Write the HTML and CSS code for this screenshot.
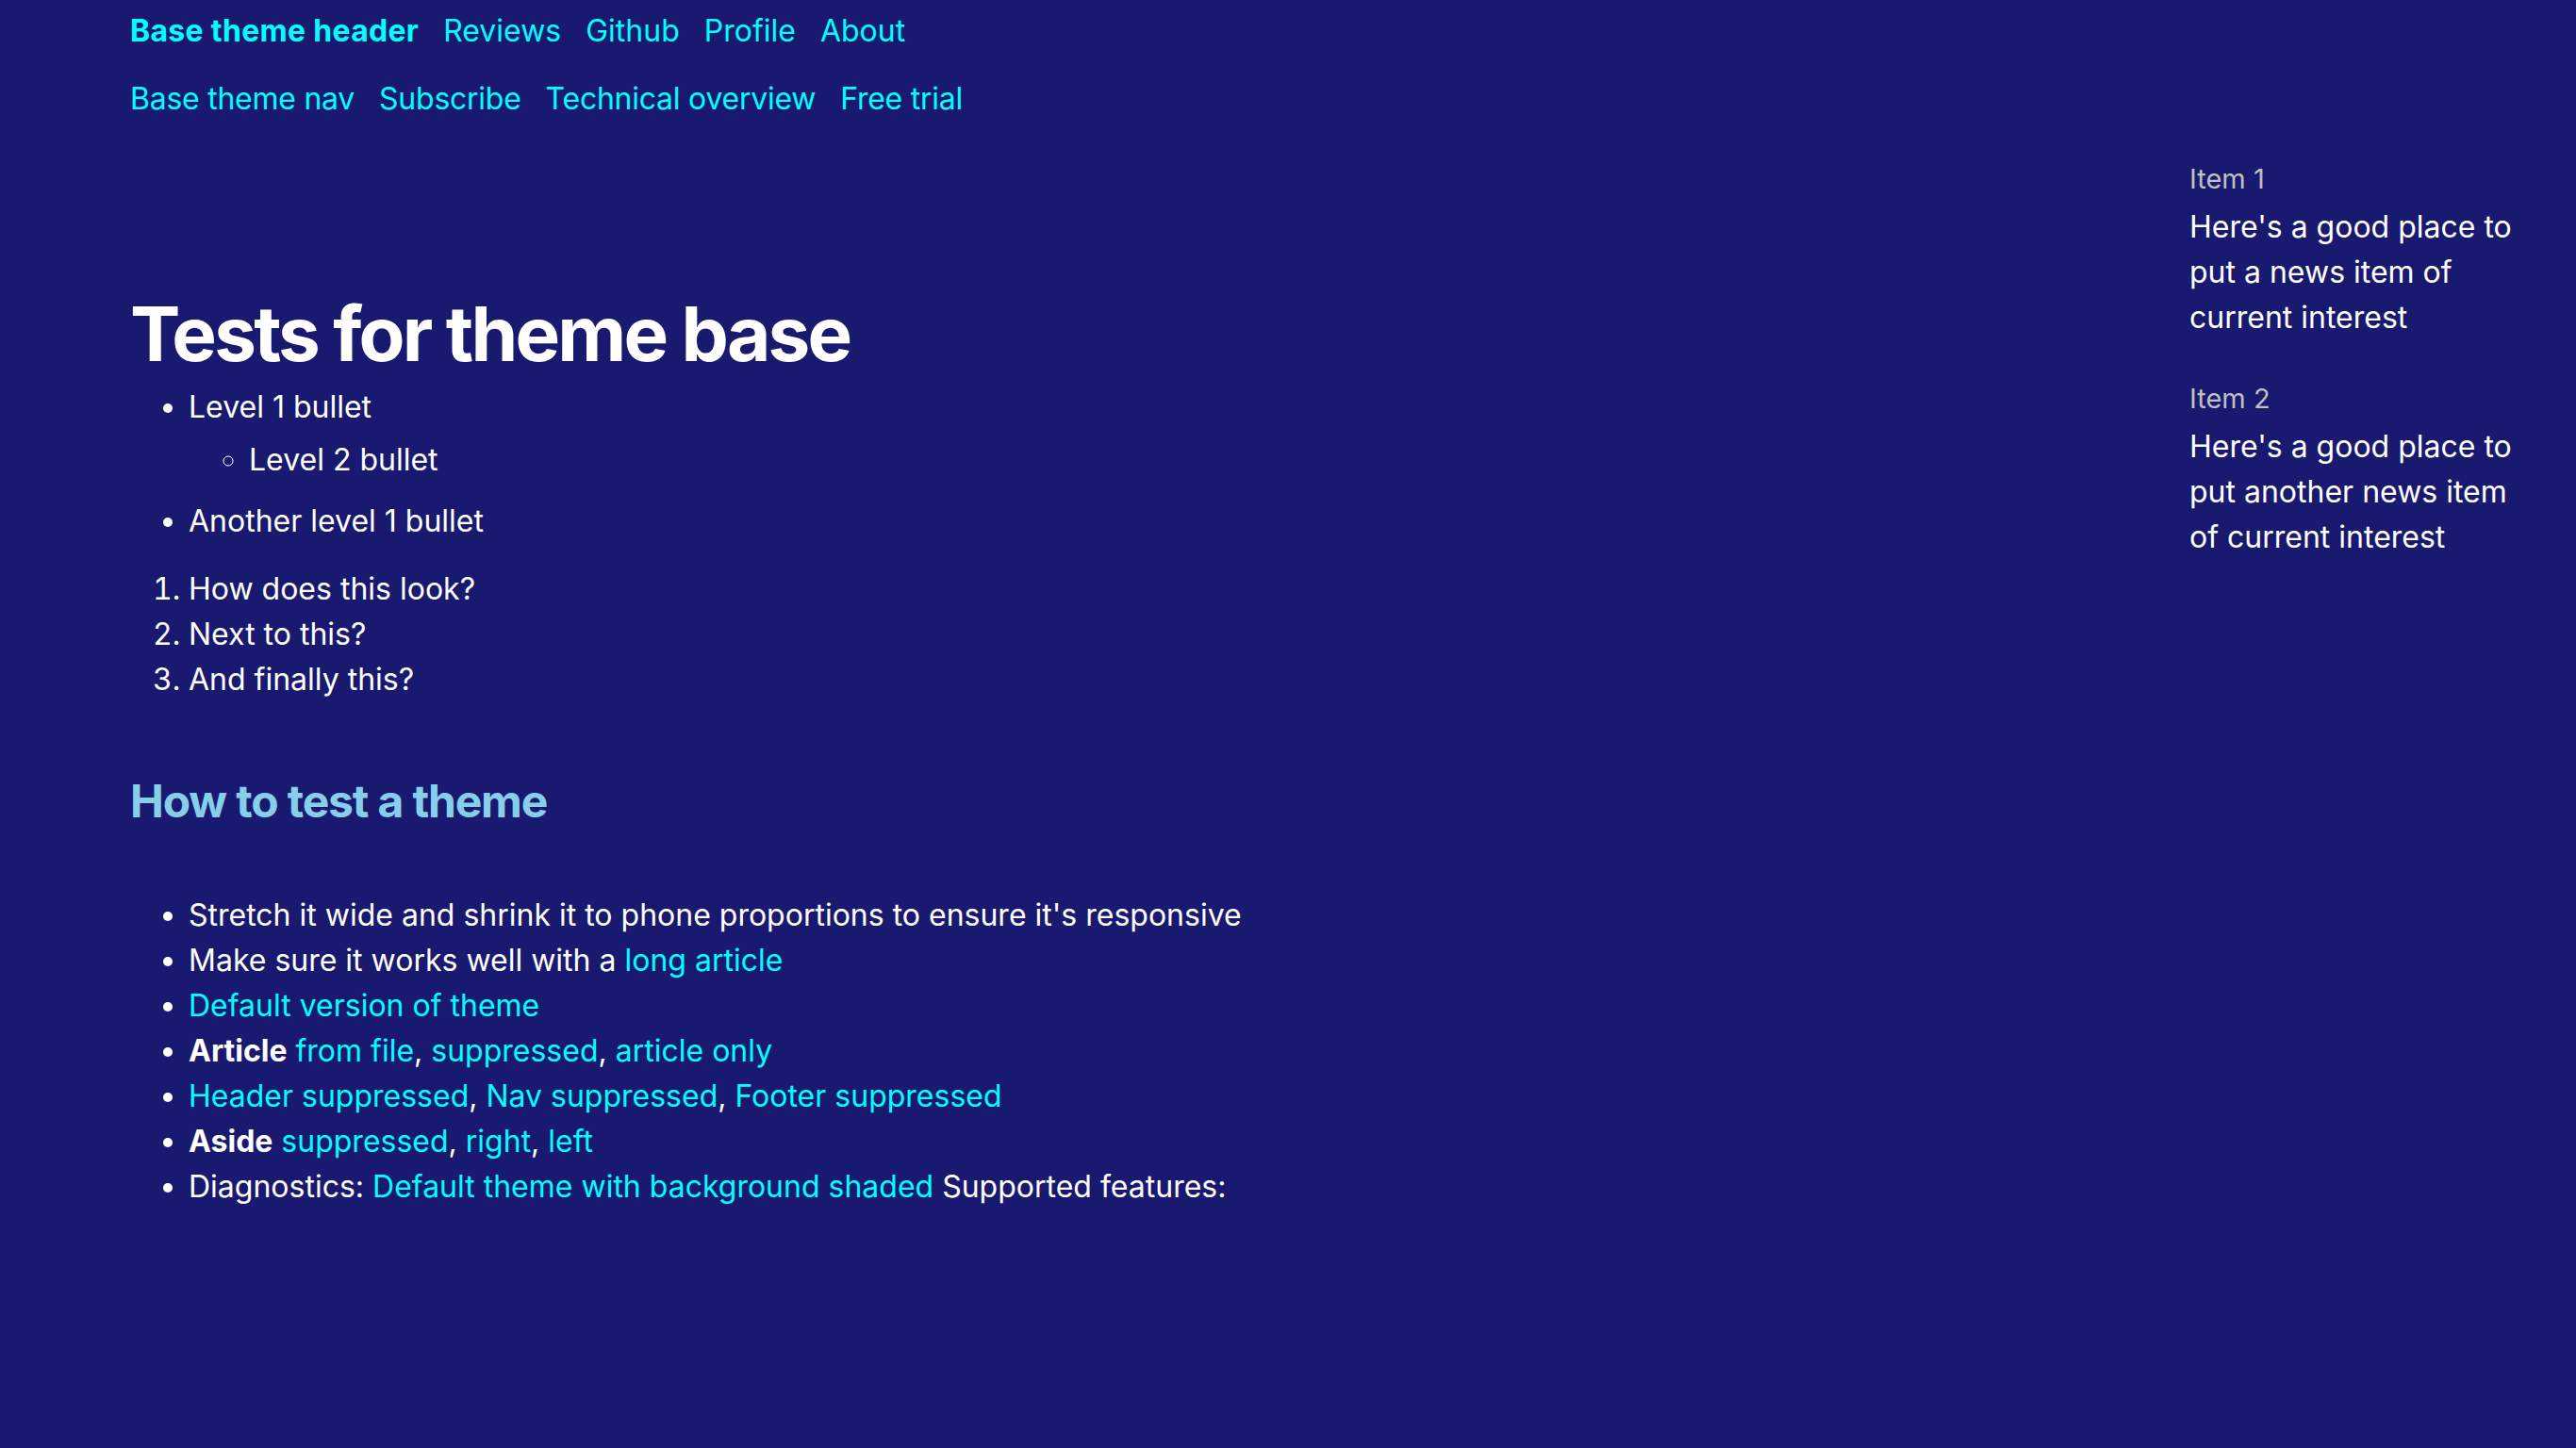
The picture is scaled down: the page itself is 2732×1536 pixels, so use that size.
FILE: index.html
```html
<!DOCTYPE html>
<html lang="en">
<head>
<meta charset="utf-8">
<title>Tests for theme base</title>
<link rel="stylesheet" href="styles.css">
</head>
<body>
<header class="site-header">
  <a class="brand" href="#">Base theme header</a>
  <a href="#">Reviews</a>
  <a href="#">Github</a>
  <a href="#">Profile</a>
  <a href="#">About</a>
</header>
<nav class="site-nav">
  <a href="#">Base theme nav</a>
  <a href="#">Subscribe</a>
  <a href="#">Technical overview</a>
  <a href="#">Free trial</a>
</nav>
<div class="layout">
  <main class="content">
    <h1>Tests for theme base</h1>
    <ul class="list">
      <li>Level 1 bullet
        <ul class="nested">
          <li>Level 2 bullet</li>
        </ul>
      </li>
      <li>Another level 1 bullet</li>
    </ul>
    <ol class="olist">
      <li>How does this look?</li>
      <li>Next to this?</li>
      <li>And finally this?</li>
    </ol>
    <h2>How to test a theme</h2>
    <ul class="list links">
      <li>Stretch it wide and shrink it to phone proportions to ensure it's responsive</li>
      <li>Make sure it works well with a <a href="#">long article</a></li>
      <li><a href="#">Default version of theme</a></li>
      <li><strong>Article</strong> <a href="#">from file</a>, <a href="#">suppressed</a>, <a href="#">article only</a></li>
      <li><a href="#">Header suppressed</a>, <a href="#">Nav suppressed</a>, <a href="#">Footer suppressed</a></li>
      <li><strong>Aside</strong> <a href="#">suppressed</a>, <a href="#">right</a>, <a href="#">left</a></li>
      <li>Diagnostics: <a href="#">Default theme with background shaded</a> Supported features:</li>
    </ul>
  </main>
  <aside class="aside">
    <section class="news">
      <div class="news-label">Item 1</div>
      <p class="news-text">Here's a good place to put a news item of current interest</p>
    </section>
    <section class="news">
      <div class="news-label">Item 2</div>
      <p class="news-text">Here's a good place to put another news item of current interest</p>
    </section>
  </aside>
</div>
</body>
</html>
```
FILE: styles.css
```css
* { box-sizing: border-box; }
html, body {
  margin: 0;
  background: #191970;
}
body {
  min-height: 1536px;
  font-family: Inter, "Noto Sans", sans-serif;
  font-size: 32px;
  line-height: 48px;
  color: #ffffff;
  padding: 9px 0 0 138px;
}
a { color: #00ffff; text-decoration: none; }

.site-header, .site-nav {
  display: flex;
  gap: 26px;
}
.site-header .brand { font-weight: 700; letter-spacing: 0.3px; }
.site-nav { margin-top: 24px; letter-spacing: -0.25px; }

.layout {
  display: grid;
  grid-template-columns: 1fr 360px;
  column-gap: 40px;
  padding-right: 50px;
  margin-top: 31px;
}

.content h1 {
  font-size: 80px;
  line-height: 96px;
  font-weight: 700;
  letter-spacing: -2.8px;
  margin: 146px 0 6px;
}
.list {
  margin: 0;
  padding-left: 62px;
}
.list li { margin: 0; }
.nested {
  list-style: circle;
  margin: 8px 0 17px;
  padding-left: 64px;
}
.olist {
  margin: 24px 0 0;
  padding-left: 62px;
}
.content h2 {
  font-size: 48px;
  line-height: 58px;
  font-weight: 700;
  letter-spacing: -1.15px;
  color: #87ceeb;
  margin: 76px 0 68px;
}
.links strong { font-weight: 700; }

.aside { padding-top: 9px; }
.news { margin-bottom: 41px; }
.news-label {
  font-size: 29px;
  line-height: 42px;
  color: #c0c0c0;
}
.news-text {
  margin: 6px 0 0;
}
```
